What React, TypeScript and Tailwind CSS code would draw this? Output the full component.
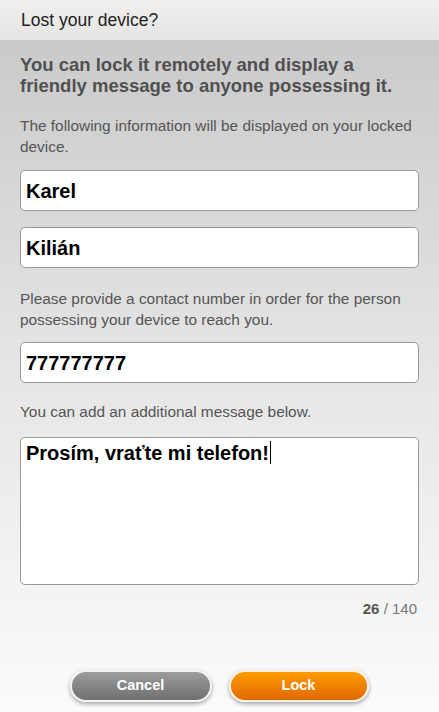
import React from 'react'

const Field = ({ value }: { value: string }) => (
  <div className="h-[41px] rounded-[5px] border border-[#9a9a9a] bg-white px-[5px] flex items-center text-[20px] font-bold text-black leading-none">
    {value}
  </div>
)

const App = () => {
  return (
    <div className="w-[439px] h-[712px] flex flex-col font-['Liberation_Sans',Arial,sans-serif] overflow-hidden">
      {/* Header */}
      <div className="h-[40px] shrink-0 bg-gradient-to-b from-[#f0efee] to-[#e5e5e3] flex items-center px-[21px] text-[17.5px] text-[#222]">
        Lost your device?
      </div>

      {/* Body */}
      <div className="flex-1 flex flex-col px-[20px] bg-gradient-to-b from-[#cacaca] via-[#e6e6e6] to-[#fbfbfb]">
        <h2 className="mt-[14px] text-[18.5px] leading-[21px] font-bold text-[#505050]">
          You can lock it remotely and display a friendly message to anyone possessing it.
        </h2>
        <p className="mt-[19px] text-[15.4px] leading-[21px] text-[#555]">
          The following information will be displayed on your locked device.
        </p>

        <div className="mt-[13px] flex flex-col gap-[16px]">
          <Field value="Karel" />
          <Field value="Kilián" />
        </div>

        <p className="mt-[20px] text-[15.4px] leading-[21px] text-[#555]">
          Please provide a contact number in order for the person possessing your device to reach you.
        </p>

        <div className="mt-[12px]">
          <Field value="777777777" />
        </div>

        <p className="mt-[18px] text-[15.4px] leading-[21px] text-[#555]">
          You can add an additional message below.
        </p>

        <div className="mt-[15px] h-[148px] rounded-[5px] border border-[#9a9a9a] bg-white px-[5px] pt-[3px] text-[20px] leading-[24px] font-bold text-black">
          Prosím, vraťte mi telefon!
          <span className="inline-block w-px h-[23px] bg-black align-top ml-px" />
        </div>

        <div className="mt-[16px] text-right pr-[2px] text-[15px] leading-[16px] text-[#777]">
          <span className="font-bold text-[#555]">26</span> / 140
        </div>

        {/* Buttons */}
        <div className="mt-[53px] flex justify-center gap-[17px] pr-[1px]">
          <button className="w-[142px] h-[32px] rounded-full border-2 border-white/90 bg-gradient-to-b from-[#9d9d9d] to-[#707070] text-white text-[14.5px] font-bold shadow-[0_2px_4px_rgba(0,0,0,0.35)]">
            Cancel
          </button>
          <button className="w-[140px] h-[32px] rounded-full border-2 border-white/90 bg-gradient-to-b from-[#ff9c00] to-[#e06800] text-white text-[14.5px] font-bold shadow-[0_2px_4px_rgba(0,0,0,0.35)]">
            Lock
          </button>
        </div>
      </div>
    </div>
  )
}

export default App
